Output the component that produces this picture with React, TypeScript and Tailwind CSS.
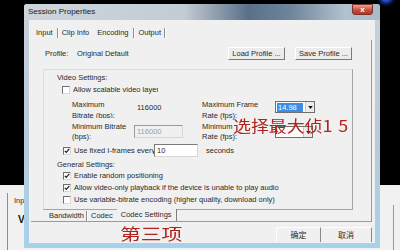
import React from 'react';

const CheckBox = ({ checked }: { checked?: boolean }) => (
  <span className="relative w-[8px] h-[8px] shrink-0 border border-t-[#6f6f6f] border-l-[#6f6f6f] border-b-[#d8d8d8] border-r-[#d8d8d8] bg-white">
    {checked && (
      <svg viewBox="0 0 6 6" className="absolute inset-0 w-[6px] h-[6px]">
        <path d="M0.8 2.8 L2.3 4.4 L5.3 0.9" stroke="#1c1c1c" strokeWidth="1.2" fill="none" />
      </svg>
    )}
  </span>
);

const Combo = ({ value, w }: { value?: string; w: string }) => (
  <div className={`flex h-[12px] ${w} border border-[#6f6f6f] bg-white`}>
    <div className="flex-1 flex items-center pl-[1px]">
      {value && <span className="w-[26px] h-[9px] leading-[9px] pl-[1px] bg-[#3a8ee8] text-white">{value}</span>}
    </div>
    <div className="w-[9px] flex items-center justify-center bg-[#ececec] border-l border-[#c8c8c8]">
      <svg viewBox="0 0 6 4" className="w-[5px] h-[3px]">
        <path d="M0 0 L6 0 L3 4 Z" fill="#111" />
      </svg>
    </div>
  </div>
);

const Btn = ({ label, w }: { label: string; w: string }) => (
  <div className={`flex items-center justify-center h-[13px] ${w} bg-[#ececec] border border-t-white border-l-white border-r-[#7a7a7a] border-b-[#7a7a7a]`}>
    {label}
  </div>
);

const Sep = () => <span className="block w-px h-[10px] bg-[#8c8c8c] border-r border-white box-content" />;

export default function App() {
  return (
    <div className="relative w-[400px] h-[250px] overflow-hidden bg-black text-[7.5px] leading-none text-[#2a2a2a] font-['Liberation_Sans',Arial,sans-serif]">
      {/* desktop behind the dialog */}
      <div className="flex flex-col h-full">
        <div className="h-[185px] bg-black" />
        <div className="flex-1 flex justify-between bg-[#f1f1f1]">
          <div className="ml-[7px] mt-[8px] pl-[6px] pt-[4px] border-l border-[#8e8e8e] flex flex-col">
            <span>Input</span>
            <span className="mt-[10px] ml-[4px] text-[10px] font-bold text-[#111]">V</span>
          </div>
          <div className="mr-[6px] mt-[20px] w-[8px] border-r border-[#9a9a9a]" />
        </div>
      </div>
      <div className="absolute right-[8px] top-[-7px] w-[12px] h-[10px] rounded-full bg-[#2f5dff] blur-[2px]" />

      {/* dialog window */}
      <div className="absolute left-[24px] top-[4px] w-[356px] h-[244px] flex flex-col rounded-t-[3px] bg-[linear-gradient(to_bottom,#c9d1da,#b9c9d7_55%,#a6d2ec)]">
        <div className="h-[16px] flex items-start rounded-t-[3px] bg-[linear-gradient(to_right,#cdd4dc_0%,#c3ccd5_45%,#5a7088_63%,#6f859b_75%,#b2c1cf_90%,#a9bac9_100%)]">
          <span className="ml-[4px] mt-[4px] text-[8px] text-[#1a1a1a]">Session Properties</span>
          <div className="ml-auto mr-[7px] w-[21px] h-[11px] rounded-b-[3px] border border-[#7a3128] bg-[linear-gradient(to_bottom,#e9a394,#c9503d_55%,#b8341f)] flex items-center justify-center">
            <span className="text-white text-[8px] font-bold leading-none">x</span>
          </div>
        </div>

        <div className="mx-[5px] h-[223px] bg-[#f0f0f0] flex flex-col">
          {/* top tabs */}
          <div className="h-[20px] flex items-center pt-[6px] pl-[7px]">
            <span>Input</span>
            <span className="ml-[4px]"><Sep /></span>
            <span className="ml-[3px]">Clip Info</span>
            <span className="ml-[8px]">Encoding</span>
            <span className="ml-[5px]"><Sep /></span>
            <span className="ml-[3px]">Output</span>
            <span className="ml-[3px]"><Sep /></span>
          </div>

          {/* tab page */}
          <div className="ml-[2px] w-[341px] h-[182px] flex flex-col pl-[12px] border-r border-b border-[#9a9a9a]">
            <div className="mt-[7px] h-[13px] flex items-center">
              <span className="ml-[2px] w-[32px]">Profile:</span>
              <span>Original Default</span>
              <div className="ml-auto flex gap-[10px] mr-[19px]">
                <Btn label="Load Profile ..." w="w-[57px]" />
                <Btn label="Save Profile ..." w="w-[57px]" />
              </div>
            </div>

            <div className="mt-[9px] w-[310px] h-[142px] flex flex-col border border-t-[#dcdcdc] border-l-[#dcdcdc] border-r-[#a4a4a4] border-b-[#a4a4a4]">
              <div className="mt-[3px] h-[10px] flex items-center pl-[13px]">Video Settings:</div>
              <div className="mt-[2px] h-[10px] flex items-center pl-[18px] gap-[3px]">
                <CheckBox />
                <span className="w-[85px] overflow-hidden whitespace-nowrap">Allow scalable video layer</span>
              </div>

              <div className="mt-[4px] h-[18px] flex items-start pl-[28px]">
                <div className="w-[130px] flex">
                  <div className="w-[62px] h-[19px] leading-[11px] overflow-hidden">Maximum<br />Bitrate (bps):</div>
                  <div className="ml-[3px] h-[18px] flex items-center">116000</div>
                </div>
                <div className="w-[73px] leading-[11px]">Maximum Frame<br />Rate (fps):</div>
                <div className="mt-[2px]"><Combo value="14.98" w="w-[40px]" /></div>
              </div>

              <div className="mt-[5px] h-[20px] flex items-start pl-[28px]">
                <div className="w-[130px] flex">
                  <div className="w-[62px] leading-[10px]">Minimum Bitrate<br />(bps):</div>
                  <div className="mt-[3px] w-[49px] h-[13px] flex items-center pl-[2px] text-[#a0a0a0] border border-t-[#9a9a9a] border-l-[#9a9a9a] border-b-[#d6d6d6] border-r-[#d6d6d6]">116000</div>
                </div>
                <div className="w-[73px] leading-[10px]">Minimum<br />Rate (fps):</div>
                <div className="mt-[4px]"><Combo w="w-[38px]" /></div>
              </div>

              <div className="mt-[2px] h-[13px] flex items-center pl-[19px]">
                <CheckBox checked />
                <span className="ml-[3px] w-[80px] overflow-hidden whitespace-nowrap">Use fixed I-frames every</span>
                <div className="w-[44px] h-[13px] flex items-center pl-[2px] bg-white border border-t-[#7a7a7a] border-l-[#7a7a7a] border-b-[#d6d6d6] border-r-[#d6d6d6]">10</div>
                <span className="ml-[8px]">seconds</span>
              </div>

              <div className="mt-[3px] h-[10px] flex items-center pl-[13px]">General Settings:</div>
              <div className="mt-[1px] h-[10px] flex items-center pl-[19px] gap-[3px]">
                <CheckBox checked />
                <span>Enable random positioning</span>
              </div>
              <div className="mt-[2px] h-[10px] flex items-center pl-[19px] gap-[3px]">
                <CheckBox checked />
                <span>Allow video-only playback if the device is unable to play audio</span>
              </div>
              <div className="mt-[2px] h-[10px] flex items-center pl-[19px] gap-[3px]">
                <CheckBox />
                <span>Use variable-bitrate encoding (higher quality, download only)</span>
              </div>
            </div>

            {/* bottom tabs of inner control */}
            <div className="h-[11px] w-[310px] flex items-center">
              <span className="ml-[6px]">Bandwidth</span>
              <span className="ml-[2px]"><Sep /></span>
              <span className="ml-[3px]">Codec</span>
              <div className="ml-[4px] -mt-[2px] h-[12px] w-[60px] flex items-center pl-[4px] bg-[#f0f0f0] border-r border-[#7f7f7f]">Codec Settings</div>
            </div>
          </div>

          {/* bottom row */}
          <div className="h-[21px] flex items-start">
            <span className="ml-[91px] mt-[3px] inline-block origin-left scale-x-[1.3] text-[16px] leading-[16px] text-[#b0231c] font-['Noto_Sans_CJK_SC',sans-serif]">第三项</span>
            <div className="ml-auto mr-[3px] mt-[5px] flex font-['Noto_Sans_CJK_SC',sans-serif] text-[8px]">
              <div className="w-[45px] h-[15px] flex items-center justify-center border-t border-l border-white border-r border-r-[#8a8a8a]">确定</div>
              <div className="w-[51px] h-[15px] flex items-center justify-center border-t border-white border-r border-r-[#8a8a8a]">取消</div>
            </div>
          </div>
        </div>
      </div>

      {/* annotation */}
      <span className="absolute left-[233px] top-[117px] origin-left scale-x-[1.12] text-[16px] leading-[16px] text-[#b0231c] font-['Noto_Sans_CJK_SC',sans-serif]">
        选择最大侦<span className="tracking-[5px]">15</span>
      </span>
    </div>
  );
}
